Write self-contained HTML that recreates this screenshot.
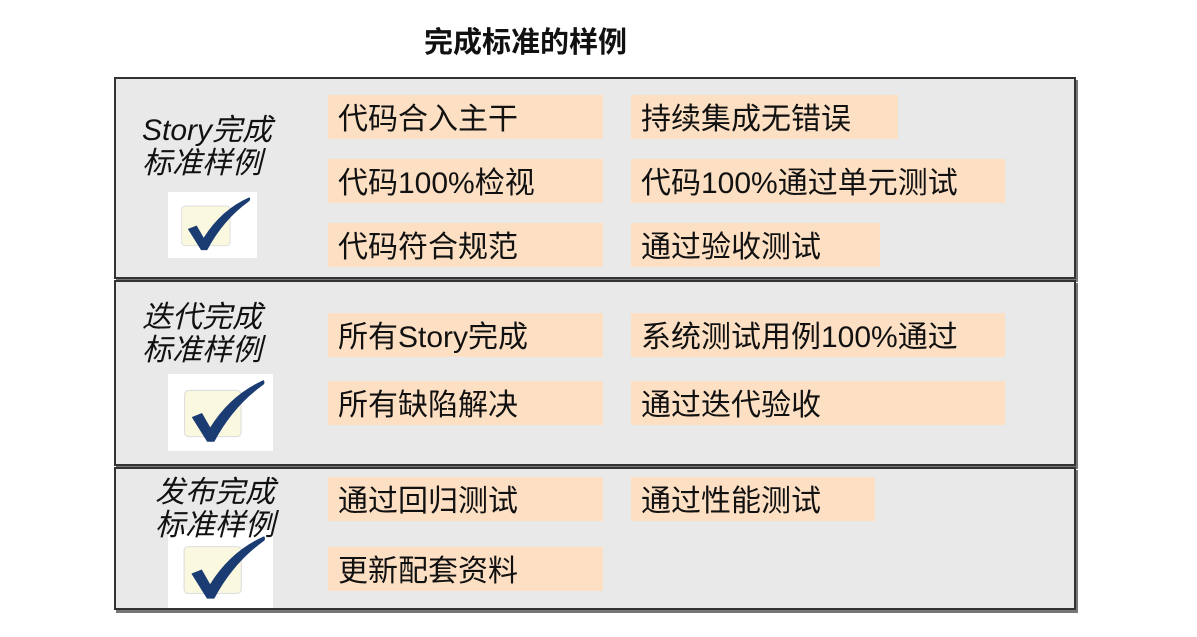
<!DOCTYPE html>
<html><head><meta charset="utf-8"><style>
body{margin:0;width:1197px;height:637px;background:#fff;position:relative;overflow:hidden;font-family:"Liberation Sans","Noto Sans CJK SC",sans-serif;}
.a{position:absolute}
.title{left:424px;top:25px;font-size:29px;font-weight:bold;color:#111;line-height:36px}
.panel{position:absolute;left:114px;width:962px;background:#e9e9e9;border:2px solid #333;box-shadow:2px 3px 0 #777;box-sizing:border-box}
.tag{position:absolute;background:#fde0c4;font-size:30px;color:#111;line-height:49px;padding-left:10px;box-sizing:border-box;height:44px;white-space:nowrap;overflow:hidden}
.lbl{position:absolute;font-style:italic;font-size:30px;line-height:33px;color:#111;white-space:nowrap;z-index:2}
.ck{position:absolute;background:#fff}
</style></head><body>
<div class="a title">完成标准的样例</div>
<div class="panel" style="top:77px;height:202px"></div>
<div class="panel" style="top:280px;height:186px"></div>
<div class="panel" style="top:467px;height:143px"></div>

<div class="lbl" style="left:142px;top:114px">Story完成<br>标准样例</div>
<div class="lbl" style="left:142px;top:301px">迭代完成<br>标准样例</div>
<div class="lbl" style="left:155px;top:476px">发布完成<br>标准样例</div>

<svg class="ck" style="left:168px;top:192px" width="89" height="66" viewBox="0 0 100 75"><rect x="15" y="16" width="55" height="45" rx="4" fill="#fbf8e0" stroke="#ddd"/><path d="M22 42 L32 38 L40 52 Q60 20 92 6 Q94 9 91 11 Q62 32 44 66 L37 66 Z" fill="#1b3c72"/></svg>
<svg class="ck" style="left:168px;top:374px" width="105" height="77" viewBox="0 0 100 75"><rect x="15" y="16" width="55" height="45" rx="4" fill="#fbf8e0" stroke="#ddd"/><path d="M22 42 L32 38 L40 52 Q60 20 92 6 Q94 9 91 11 Q62 32 44 66 L37 66 Z" fill="#1b3c72"/></svg>
<svg class="ck" style="left:168px;top:530px" width="105" height="78" viewBox="0 0 100 75"><rect x="15" y="16" width="55" height="45" rx="4" fill="#fbf8e0" stroke="#ddd"/><path d="M22 42 L32 38 L40 52 Q60 20 92 6 Q94 9 91 11 Q62 32 44 66 L37 66 Z" fill="#1b3c72"/></svg>

<div class="tag" style="left:328px;top:95px;width:275px">代码合入主干</div>
<div class="tag" style="left:631px;top:95px;width:267px">持续集成无错误</div>
<div class="tag" style="left:328px;top:159px;width:275px">代码100%检视</div>
<div class="tag" style="left:631px;top:159px;width:374px">代码100%通过单元测试</div>
<div class="tag" style="left:328px;top:223px;width:275px">代码符合规范</div>
<div class="tag" style="left:631px;top:223px;width:249px">通过验收测试</div>

<div class="tag" style="left:328px;top:313px;width:275px">所有Story完成</div>
<div class="tag" style="left:631px;top:313px;width:374px">系统测试用例100%通过</div>
<div class="tag" style="left:328px;top:381px;width:275px">所有缺陷解决</div>
<div class="tag" style="left:631px;top:381px;width:374px">通过迭代验收</div>

<div class="tag" style="left:328px;top:477px;width:275px">通过回归测试</div>
<div class="tag" style="left:631px;top:477px;width:244px">通过性能测试</div>
<div class="tag" style="left:328px;top:547px;width:275px">更新配套资料</div>
</body></html>
